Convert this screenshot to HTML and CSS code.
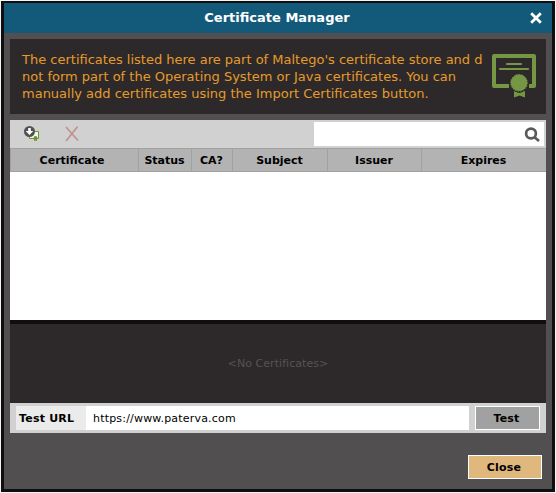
FILE: index.html
```html
<!DOCTYPE html>
<html lang="en">
<head>
<meta charset="utf-8">
<title>Certificate Manager</title>
<link rel="stylesheet" href="styles.css">
</head>
<body>
<main class="dialog">
  <header class="titlebar">
    <h1>Certificate Manager</h1>
    <svg class="close-icon" width="12" height="12" viewBox="0 0 12 12"><path d="M1.2 1.2 10.8 10.8M10.8 1.2 1.2 10.8"/></svg>
  </header>
  <div class="content">
    <section class="notice">
      <p><span>The certificates listed here are part of Maltego's certificate store and d</span><br><span>not form part of the Operating System or Java certificates. You can</span><br><span>manually add certificates using the Import Certificates button.</span></p>
      <svg class="cert-icon" width="44" height="44" viewBox="0 0 44 44">
        <path class="frame" d="M17 32H2V2H42V32H37"/>
        <path class="lines" d="M15 10H29M8 15H36"/>
        <path class="fill" d="M22 37 27.500 39 33 37V43.500L27.500 41.500 22 43.500Z"/>
        <circle class="halo" cx="27" cy="28.800" r="9.600"/>
        <circle class="fill" cx="27" cy="28.800" r="8.300"/>
        <circle class="teeth" cx="27" cy="28.800" r="8.400"/>
      </svg>
    </section>
    <section class="store">
      <div class="toolbar">
        <svg class="import-icon" width="16" height="16" viewBox="0 0 16 16">
          <path class="card" d="M9 5.500H14.500V12.500H5.500V9"/>
          <path class="card-fill" d="M6 9H9V6H14V12H6Z"/>
          <path class="seal" d="M9.500 12a2 2 0 1 1 4 0l-.5 1v2l-1.500-.5-1.500.5V13Z"/>
          <circle class="badge" cx="5.500" cy="5.500" r="5.500"/>
          <path class="arrow" d="M4.200 2H6.800V5H9.300L5.500 9 1.700 5H4.200Z"/>
        </svg>
        <svg class="delete-icon" width="14" height="16" viewBox="0 0 14 16"><path d="M1 1 13 14.500M12.500 .8 1 15"/></svg>
        <div class="search">
          <svg width="16" height="16" viewBox="0 0 16 16"><circle cx="7" cy="6.500" r="4.900"/><path d="M10.500 10.200 15 14"/></svg>
        </div>
      </div>
      <div class="columns">
        <span>Certificate</span><span>Status</span><span>CA?</span><span>Subject</span><span>Issuer</span><span>Expires</span>
      </div>
      <div class="rows"></div>
      <div class="details">&lt;No Certificates&gt;</div>
      <div class="test-bar">
        <label for="url">Test URL</label>
        <input id="url" value="https://www.paterva.com">
        <button>Test</button>
      </div>
    </section>
    <footer><button class="primary">Close</button></footer>
  </div>
</main>
</body>
</html>
```
FILE: styles.css
```css
* { box-sizing: border-box; }
body {
  margin: 0;
  width: 556px;
  height: 493px;
  padding: 1px;
  overflow: hidden;
  background: #f3f4f4;
  font: 11px "DejaVu Sans", sans-serif;
  color: #000;
}
.dialog {
  width: 554px;
  height: 491px;
  border: solid #100e0f;
  border-width: 2px 3px 3px;
  background: #514f50;
}
.titlebar {
  display: flex;
  align-items: center;
  height: 30px;
  padding: 0 10px 0 20px;
  background: #135a7a;
}
h1 {
  flex: 1;
  margin: 0;
  text-align: center;
  font-size: 13px;
  line-height: 30px;
  color: #fff;
}
.close-icon { stroke: #fff; stroke-width: 2.8; fill: none; }
.content { padding: 6px; }
.notice {
  display: flex;
  justify-content: space-between;
  height: 75px;
  padding: 12px 10px 0 12px;
  background: #2d292a;
}
.notice p {
  margin: 0;
  white-space: nowrap;
  font-size: 13px;
  line-height: 17px;
  color: #e59b2c;
}
.cert-icon { margin-top: 3px; fill: none; stroke: #759744; }
.cert-icon .frame { stroke-width: 4; stroke-linejoin: round; }
.cert-icon .lines { stroke-width: 2.2; stroke-linecap: round; }
.cert-icon .fill { fill: #759744; stroke: none; }
.cert-icon .halo { fill: #2d292a; stroke: none; }
.cert-icon .teeth { stroke-width: 1; stroke-dasharray: 1.3 1.3; }
.store { margin-top: 6px; }
.toolbar {
  display: flex;
  height: 28px;
  padding-left: 14px;
  background: #d1d1d1;
}
.import-icon { margin-top: 6px; }
.card { fill: none; stroke: #6e962f; }
.card-fill { fill: #f3f6ee; }
.seal { fill: #6e962f; }
.badge { fill: #535152; }
.arrow { fill: #fff; }
.delete-icon { margin: 6px 0 0 25px; fill: none; stroke: #bd9290; stroke-width: 1.7; }
.search {
  display: flex;
  justify-content: flex-end;
  width: 230px;
  height: 24px;
  margin: 2px 2px 0 auto;
  padding: 5px 4px;
  background: #fff;
}
.search svg { fill: none; stroke: #5b5959; stroke-width: 2.7; }
.columns {
  display: grid;
  grid-template-columns: 129px 53px 41px 95px 94px 124px;
  height: 24px;
  border: solid #a1a1a1;
  border-width: 1px 0;
  background: #b3b3b3;
  font-weight: bold;
  line-height: 23px;
  text-align: center;
}
.columns span { padding-right: 1px; border-right: 1px solid #a1a1a1; }
.columns span:first-child { border-left: 1px solid #a1a1a1; padding-right: 5px; }
.columns span:last-child { border-right: 0; }
.rows { height: 148px; background: #fff; }
.details {
  height: 83px;
  border-top: 4px solid #100e0f;
  background: #2d292a;
  text-align: center;
  line-height: 79px;
  letter-spacing: .06px;
  color: #555354;
}
.test-bar {
  display: flex;
  height: 30px;
  padding: 3px 6px;
  background: #d1d1d1;
}
.test-bar label {
  width: 70px;
  padding-left: 3px;
  background: #ebebeb;
  font-weight: bold;
  line-height: 25px;
  letter-spacing: .2px;
}
.test-bar input {
  width: 383px;
  height: 24px;
  margin: 0 6px 0 0;
  padding: 0 7px;
  border: 0;
  background: #fff;
  font: inherit;
  letter-spacing: .19px;
  color: #000;
}
button {
  width: 65px;
  height: 24px;
  padding: 0 2px 0 0;
  border: 1px solid #fff;
  background: #a1a1a1;
  font: bold 11px "DejaVu Sans", sans-serif;
  letter-spacing: .2px;
  color: #000;
}
footer {
  display: flex;
  justify-content: flex-end;
  margin-top: 22px;
  padding-right: 4px;
}
.primary { width: 74px; background: #e0b87e; }
```
